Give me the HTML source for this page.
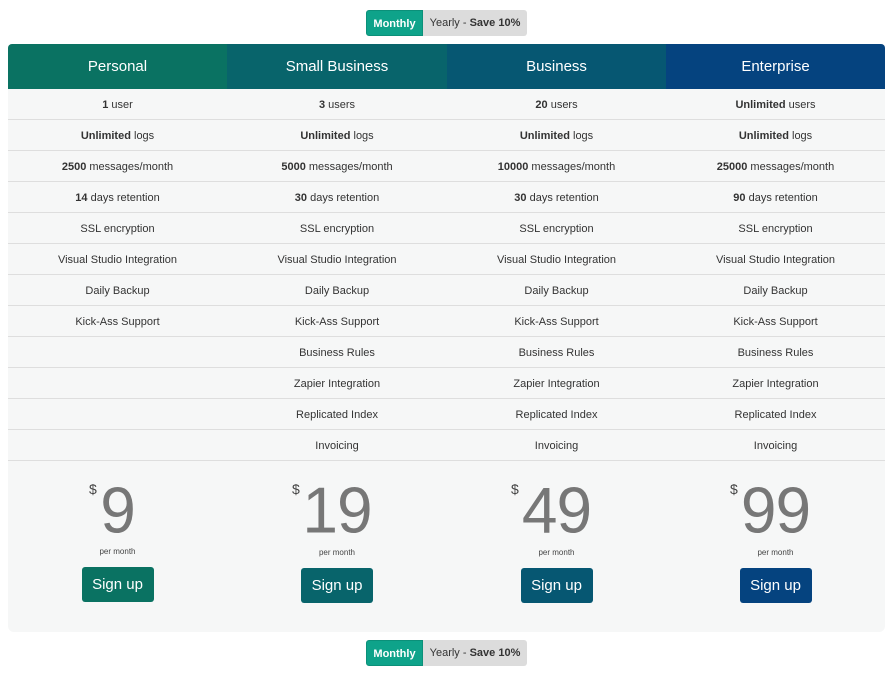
<!DOCTYPE html>
<html><head><meta charset="utf-8"><style>
*{margin:0;padding:0;box-sizing:border-box}
body{width:893px;height:679px;background:#fff;font-family:"Liberation Sans",sans-serif;position:relative;overflow:hidden;color:#333}
.tog{position:absolute;left:366px;width:161px;height:26px;font-size:11px}
.tog .m{position:absolute;left:0;top:0;width:57px;height:26px;background:#0ea38a;color:#fff;font-weight:bold;text-align:center;line-height:26px;border-radius:3px 0 0 3px;border:1px solid #0b9079}
.tog .y{position:absolute;left:57px;top:0;width:104px;height:26px;background:#dcdcdc;color:#333;text-align:center;line-height:26px;border-radius:0 3px 3px 0}
.col{position:absolute;top:44px;height:588px;background:#f6f7f7}
.hd{height:45px;color:#fff;font-size:15px;text-align:center;line-height:45px}
.r{height:31px;border-bottom:1px solid #dedede;text-align:center;font-size:11px;line-height:32px;color:#333}
.pr{position:relative;height:172px}
.dl{position:absolute;top:20px;font-size:14px;color:#444}
.num{position:absolute;top:12px;left:0;right:0;text-align:center;font-size:64px;font-weight:300;color:#777;letter-spacing:-1px;transform:scaleY(1.02)}
.pm{position:absolute;top:86px;left:0;right:0;text-align:center;font-size:8px;color:#444}
.btn{position:absolute;top:106px;left:50%;margin-left:-36px;width:72px;height:35px;border-radius:3px;color:#fff;font-size:15px;text-align:center;line-height:36px}
</style></head><body>
<div class="tog" style="top:10px"><div class="m">Monthly</div><div class="y">Yearly - <b>Save 10%</b></div></div>

<div class="col" style="left:8px;width:219px;border-radius:4px 0 0 6px">
<div class="hd" style="background:#0a7262;border-radius:4px 0 0 0">Personal</div>
<div class="r"><b>1</b> user</div><div class="r"><b>Unlimited</b> logs</div><div class="r"><b>2500</b> messages/month</div><div class="r"><b>14</b> days retention</div><div class="r">SSL encryption</div><div class="r">Visual Studio Integration</div><div class="r">Daily Backup</div><div class="r">Kick-Ass Support</div><div class="r"></div><div class="r"></div><div class="r"></div><div class="r"></div>
<div class="pr"><span class="dl" style="left:81px">$</span><div class="num">9</div><div class="pm">per month</div><div class="btn" style="background:#0a7262;top:106px">Sign up</div></div>
</div>

<div class="col" style="left:227px;width:220px">
<div class="hd" style="background:#08646b">Small Business</div>
<div class="r"><b>3</b> users</div><div class="r"><b>Unlimited</b> logs</div><div class="r"><b>5000</b> messages/month</div><div class="r"><b>30</b> days retention</div><div class="r">SSL encryption</div><div class="r">Visual Studio Integration</div><div class="r">Daily Backup</div><div class="r">Kick-Ass Support</div><div class="r">Business Rules</div><div class="r">Zapier Integration</div><div class="r">Replicated Index</div><div class="r">Invoicing</div>
<div class="pr"><span class="dl" style="left:65px">$</span><div class="num">19</div><div class="pm" style="top:87px">per month</div><div class="btn" style="background:#08646b;top:107px">Sign up</div></div>
</div>

<div class="col" style="left:447px;width:219px">
<div class="hd" style="background:#065772">Business</div>
<div class="r"><b>20</b> users</div><div class="r"><b>Unlimited</b> logs</div><div class="r"><b>10000</b> messages/month</div><div class="r"><b>30</b> days retention</div><div class="r">SSL encryption</div><div class="r">Visual Studio Integration</div><div class="r">Daily Backup</div><div class="r">Kick-Ass Support</div><div class="r">Business Rules</div><div class="r">Zapier Integration</div><div class="r">Replicated Index</div><div class="r">Invoicing</div>
<div class="pr"><span class="dl" style="left:64px">$</span><div class="num">49</div><div class="pm" style="top:87px">per month</div><div class="btn" style="background:#065772;top:107px">Sign up</div></div>
</div>

<div class="col" style="left:666px;width:219px;border-radius:0 4px 6px 0">
<div class="hd" style="background:#05437f;border-radius:0 4px 0 0">Enterprise</div>
<div class="r"><b>Unlimited</b> users</div><div class="r"><b>Unlimited</b> logs</div><div class="r"><b>25000</b> messages/month</div><div class="r"><b>90</b> days retention</div><div class="r">SSL encryption</div><div class="r">Visual Studio Integration</div><div class="r">Daily Backup</div><div class="r">Kick-Ass Support</div><div class="r">Business Rules</div><div class="r">Zapier Integration</div><div class="r">Replicated Index</div><div class="r">Invoicing</div>
<div class="pr"><span class="dl" style="left:64px">$</span><div class="num">99</div><div class="pm" style="top:87px">per month</div><div class="btn" style="background:#05437f;top:107px">Sign up</div></div>
</div>

<div class="tog" style="top:640px"><div class="m">Monthly</div><div class="y">Yearly - <b>Save 10%</b></div></div>
</body></html>
